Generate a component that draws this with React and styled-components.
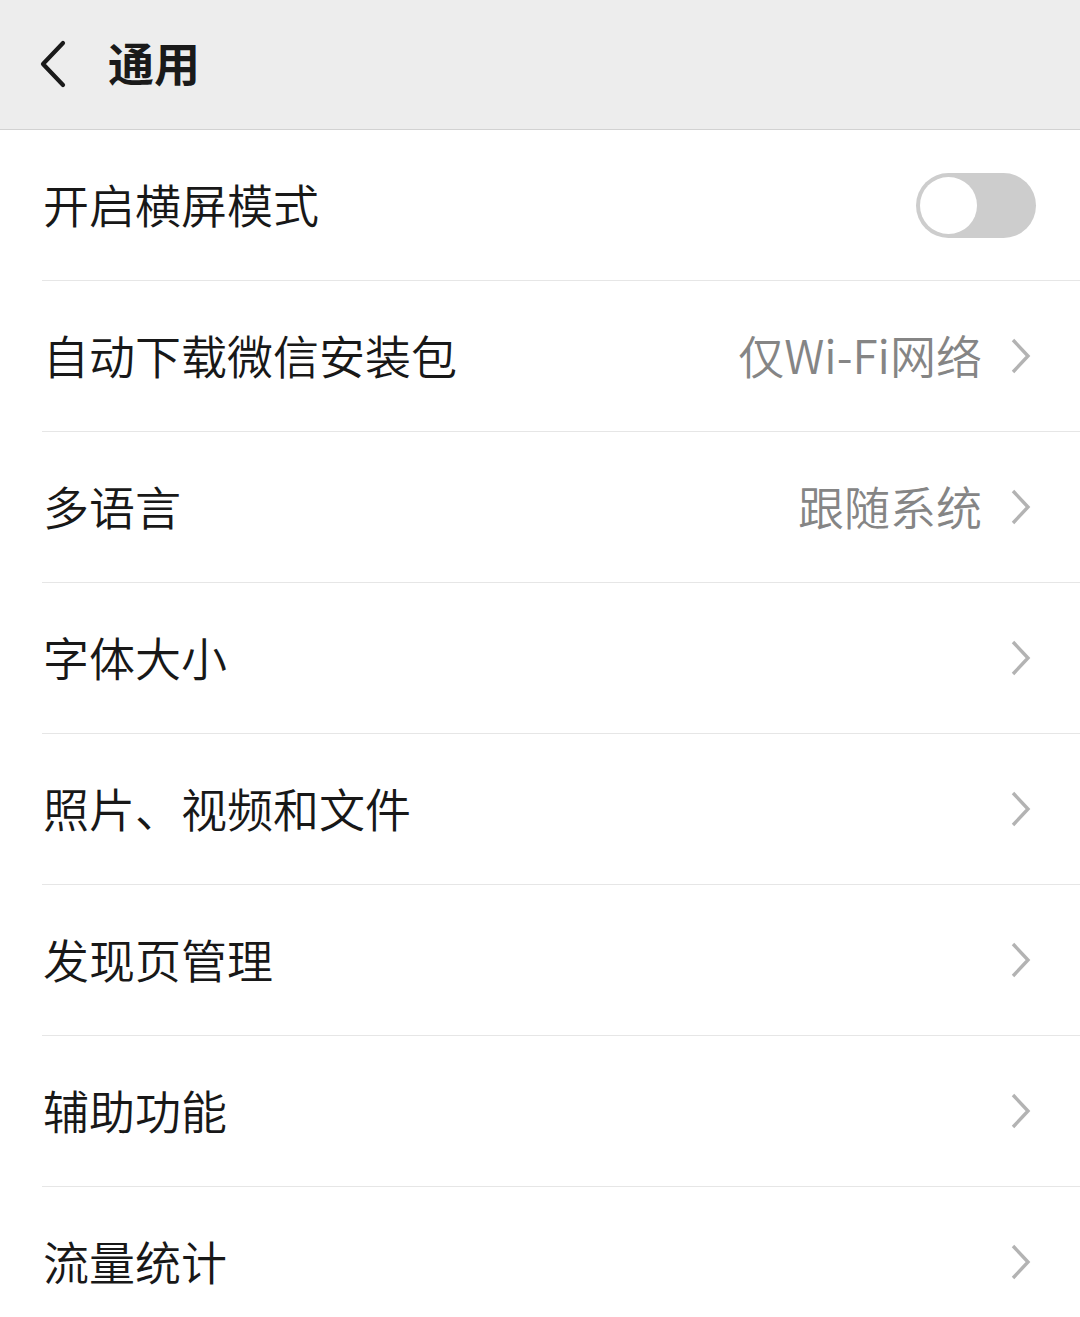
import React from 'react';
import styled, { createGlobalStyle } from 'styled-components';

const GlobalStyle = createGlobalStyle`
  html, body {
    margin: 0;
    padding: 0;
    background: #ffffff;
  }

  body {
    font-family: "Noto Sans CJK SC", "Noto Sans", sans-serif;
    color: #181818;
  }
`;

const items = [
  { label: '开启横屏模式', toggle: true },
  { label: '自动下载微信安装包', value: '仅Wi-Fi网络' },
  { label: '多语言', value: '跟随系统' },
  { label: '字体大小' },
  { label: '照片、视频和文件' },
  { label: '发现页管理' },
  { label: '辅助功能' },
  { label: '流量统计' },
];

function BackIcon() {
  return (
    <svg width="30" height="48" viewBox="0 0 30 48" fill="none">
      <polyline points="25,3 5,24 25,45" stroke="#1a1a1a" strokeWidth="4.2" strokeLinecap="round" strokeLinejoin="round" />
    </svg>
  );
}

function Chevron() {
  return (
    <svg width="22" height="38" viewBox="0 0 22 38" fill="none">
      <polyline points="3,3 18,19 3,35" stroke="#b3b3b3" strokeWidth="3.4" strokeLinejoin="miter" />
    </svg>
  );
}

export default function App() {
  return (
    <Page>
      <GlobalStyle />
      <Header>
        <BackButton>
          <BackIcon />
        </BackButton>
        <Title>通用</Title>
      </Header>
      <List>
        {items.map((item) => (
          <Row key={item.label}>
            <RowInner>
              <Label>{item.label}</Label>
              {item.toggle ? (
                <Switch>
                  <Knob />
                </Switch>
              ) : (
                <Trailing>
                  {item.value && <Value>{item.value}</Value>}
                  <Chevron />
                </Trailing>
              )}
            </RowInner>
          </Row>
        ))}
      </List>
    </Page>
  );
}

const Page = styled.div`
  width: 1080px;
  min-height: 1317px;
  background: #ffffff;
  display: flex;
  flex-direction: column;
`;

const Header = styled.header`
  height: 129px;
  background: #ededed;
  border-bottom: 1px solid #d2d2d2;
  display: flex;
  align-items: center;
  padding-left: 38px;
  gap: 40px;
`;

const BackButton = styled.div`
  display: flex;
  align-items: center;
  margin-top: -2px;
`;

const Title = styled.h1`
  margin: -7px 0 0;
  font-size: 46px;
  font-weight: 700;
  color: #1a1a1a;
  letter-spacing: 0;
  line-height: 1;
`;

const List = styled.div`
  display: flex;
  flex-direction: column;
`;

const Row = styled.div`
  padding-left: 42px;
  background: #ffffff;
`;

const RowInner = styled.div`
  height: 150px;
  border-bottom: 1px solid #e6e6e6;
  display: flex;
  align-items: center;
  justify-content: space-between;
  padding-right: 44px;
`;

const Label = styled.span`
  font-size: 46px;
  font-weight: 350;
  color: #181818;
  line-height: 1;
  margin: -4px 0 0 1px;
`;

const Trailing = styled.div`
  display: flex;
  align-items: center;
  gap: 28px;
  margin-right: 4px;
`;

const Value = styled.span`
  font-size: 46px;
  font-weight: 350;
  color: #858585;
  line-height: 1;
  margin-top: -4px;
`;

const Switch = styled.div`
  width: 120px;
  height: 65px;
  border-radius: 33px;
  background: #cdcdcd;
  padding: 4px;
  box-sizing: border-box;
  display: flex;
  align-items: center;
`;

const Knob = styled.div`
  width: 57px;
  height: 57px;
  border-radius: 50%;
  background: #ffffff;
`;
